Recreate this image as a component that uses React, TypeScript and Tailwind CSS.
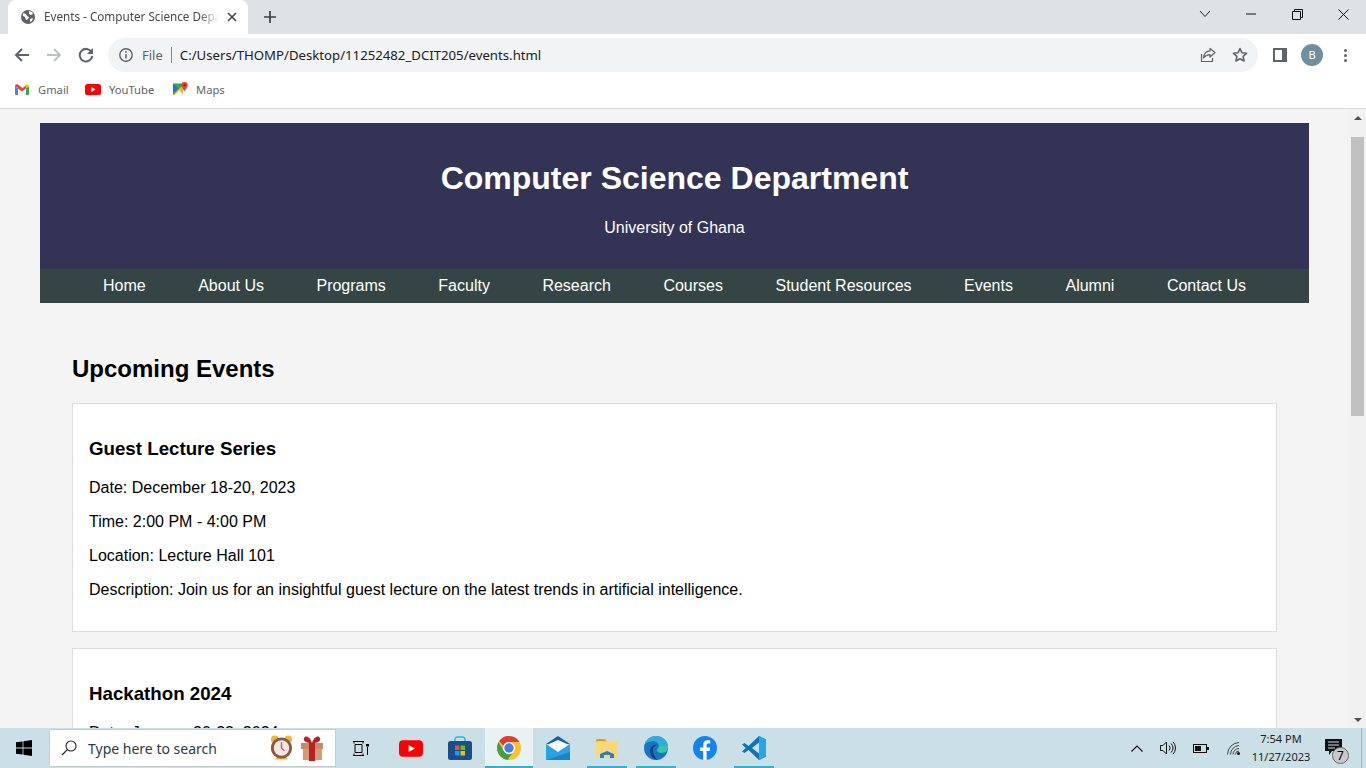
import React from "react";

const UI = { fontFamily: '"Noto Sans", "Open Sans", sans-serif' };
const WEB = { fontFamily: '"Liberation Sans", Arial, sans-serif' };

function Slot({ w, children, className = "" }: { w: number; children?: React.ReactNode; className?: string }) {
  return (
    <div className={"flex h-full shrink-0 items-center justify-center " + className} style={{ width: w }}>
      {children}
    </div>
  );
}

function Globe() {
  return (
    <svg width="16" height="16" viewBox="0 0 16 16">
      <circle cx="8" cy="8" r="7" fill="#5f6368" />
      <path d="M3 4l3 1 1 2 2 1-1 2 -2 1-1-3-2-1zM9 2l3 1 1 2-2 1-2-1zM10 10l3-1-1 3-2 1z" fill="#fff" />
    </svg>
  );
}

function TabStrip() {
  return (
    <div className="flex h-[34px] shrink-0 items-end bg-[#dee1e6]">
      <div className="relative ml-[8px] flex h-[34px] w-[240px] items-center rounded-t-[8px] bg-white pl-[12px]">
        <Globe />
        <span className="ml-[8px] w-[177px] overflow-hidden whitespace-nowrap text-[11.7px] text-[#45474a]" style={{ ...UI, maskImage: "linear-gradient(90deg,#000 155px,transparent 175px)" }}>
          Events - Computer Science Department
        </span>
        <svg width="10" height="10" viewBox="0 0 10 10" className="ml-[6px]">
          <path d="M1 1l8 8M9 1l-8 8" stroke="#45474a" strokeWidth="1.6" />
        </svg>
      </div>
      <Slot w={44}>
        <svg width="14" height="14" viewBox="0 0 14 14">
          <path d="M7 1v12M1 7h12" stroke="#3c4043" strokeWidth="1.7" />
        </svg>
      </Slot>
      <div className="flex-1" />
      <Slot w={46}>
        <svg width="12" height="8" viewBox="0 0 12 8" className="mb-[6px]"><path d="M1 1l5 5.5L11 1" fill="none" stroke="#222" strokeWidth="1" /></svg>
      </Slot>
      <Slot w={46}>
        <svg width="10" height="2" viewBox="0 0 10 2" className="mb-[6px]"><path d="M0 1h10" stroke="#111" strokeWidth="1" /></svg>
      </Slot>
      <Slot w={46}>
        <svg width="11" height="11" viewBox="0 0 11 11" className="mb-[6px]"><path d="M.5 2.5h8v8h-8zM2.5 2.5v-2h8v8h-2" fill="none" stroke="#111" strokeWidth="1" /></svg>
      </Slot>
      <Slot w={46}>
        <svg width="11" height="11" viewBox="0 0 11 11" className="mb-[6px]"><path d="M.5.5l10 10M10.5.5l-10 10" stroke="#111" strokeWidth="1" /></svg>
      </Slot>
    </div>
  );
}

function Toolbar() {
  return (
    <div className="flex h-[38px] shrink-0 items-start bg-white pl-[6px]">
      <Slot w={32} className="!h-[34px] mt-[4px]">
        <svg width="16" height="16" viewBox="0 0 16 16"><path d="M15 8H2M8 2L2 8l6 6" fill="none" stroke="#5f6368" strokeWidth="2" /></svg>
      </Slot>
      <Slot w={32} className="!h-[34px] mt-[4px]">
        <svg width="16" height="16" viewBox="0 0 16 16"><path d="M1 8h13M8 2l6 6-6 6" fill="none" stroke="#bdc1c6" strokeWidth="2" /></svg>
      </Slot>
      <Slot w={32} className="!h-[34px] mt-[4px]">
        <svg width="16" height="16" viewBox="0 0 16 16">
          <path d="M13.6 5.2A6.3 6.3 0 1 0 14.3 9" fill="none" stroke="#5f6368" strokeWidth="2" />
          <path d="M15 1v6H9z" fill="#5f6368" />
        </svg>
      </Slot>
      <div className="ml-[6px] mt-[4px] flex h-[34px] w-[1150px] items-center rounded-full bg-[#f1f3f4] pl-[11px]">
        <svg width="14" height="14" viewBox="0 0 14 14">
          <circle cx="7" cy="7" r="6.2" fill="none" stroke="#5f6368" strokeWidth="1.4" />
          <path d="M7 6v4.4" stroke="#5f6368" strokeWidth="1.5" />
          <circle cx="7" cy="3.9" r="1" fill="#5f6368" />
        </svg>
        <span className="ml-[9px] pt-px text-[13px] text-[#5f6368]" style={UI}>File</span>
        <span className="ml-[8px] h-[16px] w-px bg-[#80868b]" />
        <span className="ml-[8px] pt-px text-[13.2px] text-[#202124]" style={UI}>C:/Users/THOMP/Desktop/11252482_DCIT205/events.html</span>
        <div className="flex-1" />
        <svg width="16" height="16" viewBox="0 0 16 16">
          <path d="M1.5 7v7.5h11V11" fill="none" stroke="#5f6368" strokeWidth="1.2" />
          <path d="M15 5.5L10 1.5v2.4C6.5 4 4 6.5 3.5 11 5.5 8.5 7.5 7.6 10 7.6V10z" fill="none" stroke="#5f6368" strokeWidth="1.2" strokeLinejoin="round" />
        </svg>
        <svg width="16" height="16" viewBox="0 0 16 16" className="ml-[16px] mr-[10px]">
          <path d="M8 1.5l1.9 4.3 4.6.5-3.4 3.1 1 4.6L8 11.7l-4.1 2.3 1-4.6L1.5 6.3l4.6-.5z" fill="none" stroke="#5f6368" strokeWidth="1.6" strokeLinejoin="round" />
        </svg>
      </div>
      <div className="ml-[15px] mt-[14px] flex h-[14px] w-[14px] shrink-0 bg-[#5f6368] p-[2px] pr-[5px]">
        <div className="flex-1 bg-white" />
      </div>
      <div className="ml-[14px] mt-[10px] flex h-[22px] w-[22px] shrink-0 items-center justify-center rounded-full bg-[#6f8f9e] text-[11px] text-white" style={UI}>B</div>
      <div className="ml-[21px] mt-[15px] flex h-[13px] flex-col justify-between">
        <span className="h-[3px] w-[3px] rounded-full bg-[#5f6368]" />
        <span className="h-[3px] w-[3px] rounded-full bg-[#5f6368]" />
        <span className="h-[3px] w-[3px] rounded-full bg-[#5f6368]" />
      </div>
    </div>
  );
}

function GmailIcon() {
  return (
    <svg width="14" height="11" viewBox="0 0 14 11">
      <path d="M0 2v8a1 1 0 0 0 1 1h2V4.5z" fill="#4285f4" />
      <path d="M14 2v8a1 1 0 0 1-1 1h-2V4.5z" fill="#34a853" />
      <path d="M0 2c0-1.6 1.6-2.4 3-1.4L7 3.7v3L3 4z" fill="#ea4335" />
      <path d="M3 4.5L7 7.5l4-3v-3l-4 3-4-3z" fill="#ea4335" />
      <path d="M14 2c0-1.6-1.6-2.4-3-1.4V4.5l3-2.2z" fill="#fbbc04" />
    </svg>
  );
}

function YTIcon({ w = 16, h = 11 }: { w?: number; h?: number }) {
  return (
    <svg width={w} height={h} viewBox="0 0 16 11">
      <rect width="16" height="11" rx="2.6" fill="#f00" />
      <path d="M6.4 3.1v4.8L10.6 5.5z" fill="#fff" />
    </svg>
  );
}

function MapsIcon() {
  return (
    <svg width="15" height="15" viewBox="0 0 15 15">
      <path d="M0 1.5h9.5v11.5H0z" fill="#34a853" />
      <path d="M0 13L9.5 3.5V13z" fill="#fbbc04" />
      <path d="M0 1.5L5 6.5 0 11z" fill="#1a73e8" />
      <path d="M1 13.5L6.5 8l4 5.5z" fill="#fff" />
      <path d="M11.5 0a3.2 3.2 0 0 0-3.2 3.2C8.3 5.4 11.5 9 11.5 9s3.2-3.6 3.2-5.8A3.2 3.2 0 0 0 11.5 0z" fill="#ea4335" />
      <circle cx="11.5" cy="3.2" r="1.1" fill="#a50e0e" />
    </svg>
  );
}

function Bookmarks() {
  const t = "pt-px text-[11.2px] text-[#5f6368]";
  return (
    <div className="flex h-[37px] shrink-0 items-center border-b border-[#d9dadb] bg-white pb-[1px]">
      <span className="ml-[15px] flex"><GmailIcon /></span>
      <span className={"ml-[9px] w-[30px] " + t} style={UI}>Gmail</span>
      <span className="ml-[17px] flex"><YTIcon /></span>
      <span className={"ml-[8px] w-[46px] " + t} style={UI}>YouTube</span>
      <span className="ml-[18px] flex"><MapsIcon /></span>
      <span className={"ml-[8px] " + t} style={UI}>Maps</span>
    </div>
  );
}

function EventCard({ title, lines }: { title: string; lines: string[] }) {
  return (
    <section className="mb-[16px] border border-[#dddddd] bg-white px-[16px] pb-[16px] pt-[34px]">
      <h3 className="mb-[20px] text-[18.72px] font-bold leading-[21px] text-black">{title}</h3>
      {lines.map((l) => (
        <p key={l} className="mb-[16px] text-[16px] leading-[18px] text-black">{l}</p>
      ))}
    </section>
  );
}

const NAV = ["Home", "About Us", "Programs", "Faculty", "Research", "Courses", "Student Resources", "Events", "Alumni", "Contact Us"];

function Page() {
  return (
    <div className="min-w-0 flex-1 overflow-hidden bg-[#f4f4f4] px-[40px] pt-[14px]" style={WEB}>
      <header className="bg-[#333356] pb-[32px] pt-[37px] text-center text-white">
        <h1 className="text-[32px] font-bold leading-[37px]">Computer Science Department</h1>
        <p className="mt-[22px] text-[16px] leading-[18px]">University of Ghana</p>
      </header>
      <nav className="flex h-[34px] items-center justify-center gap-[52.5px] bg-[#354545] text-[16px] text-white">
        {NAV.map((n) => <span key={n}>{n}</span>)}
      </nav>
      <main className="px-[32px] pt-[52px]">
        <h2 className="mb-[20px] text-[24px] font-bold leading-[28px] text-black">Upcoming Events</h2>
        <EventCard
          title="Guest Lecture Series"
          lines={[
            "Date: December 18-20, 2023",
            "Time: 2:00 PM - 4:00 PM",
            "Location: Lecture Hall 101",
            "Description: Join us for an insightful guest lecture on the latest trends in artificial intelligence.",
          ]}
        />
        <EventCard title="Hackathon 2024" lines={["Date: January 20-22, 2024"]} />
      </main>
    </div>
  );
}

function Scrollbar() {
  return (
    <div className="flex w-[17px] shrink-0 flex-col bg-[#f1f1f1]">
      <div className="flex h-[17px] w-full items-center justify-center">
        <div className="h-0 w-0 border-x-[4px] border-b-[4px] border-x-transparent border-b-[#505050]" />
      </div>
      <div className="ml-[2px] mt-[11px] h-[279px] w-[13px] bg-[#c1c1c1]" />
      <div className="flex-1" />
      <div className="flex h-[17px] w-full items-center justify-center">
        <div className="h-0 w-0 border-x-[4px] border-t-[4px] border-x-transparent border-t-[#505050]" />
      </div>
    </div>
  );
}

function ChromeIcon() {
  return (
    <svg width="24" height="24" viewBox="0 0 24 24">
      <circle cx="12" cy="12" r="12" fill="#fbc02d" />
      <path d="M12 0a12 12 0 0 1 10.4 6H12a6 6 0 0 0-5.6 3.8L2.1 5.1A12 12 0 0 1 12 0z" fill="#e53935" />
      <path d="M1.6 6a12 12 0 0 0 9 17.9l4.7-6.7A6 6 0 0 1 6.6 14.6z" fill="#43a047" />
      <circle cx="12" cy="12" r="6" fill="#fff" />
      <circle cx="12" cy="12" r="4.7" fill="#3f80ea" />
    </svg>
  );
}

function Underline() {
  return <span className="absolute bottom-0 left-[5px] right-[4px] h-[2px] bg-[#2fb5cb]" />;
}

function Taskbar() {
  return (
    <div className="flex h-[40px] shrink-0 items-stretch bg-[#cbdfe6]" style={UI}>
      <Slot w={49}>
        <svg width="16" height="16" viewBox="0 0 16 16" className="ml-[-2px]">
          <path d="M0 2.3l6.6-.9v6.2H0zM7.4 1.3L16 0v7.6H7.4zM0 8.4h6.6v6.2L0 13.7zM7.4 8.4H16V16l-8.6-1.3z" fill="#000" />
        </svg>
      </Slot>
      <div className="my-[1px] flex w-[287px] shrink-0 items-center border border-[#c5cdd0] bg-white pl-[11px]">
        <svg width="16" height="16" viewBox="0 0 16 16">
          <circle cx="10" cy="6" r="5" fill="none" stroke="#222" strokeWidth="1.1" />
          <path d="M6.4 9.6L1 15" stroke="#222" strokeWidth="1.2" />
        </svg>
        <span className="ml-[11px] w-[129px] whitespace-nowrap text-[14px] text-[#2c3a45]" style={UI}>Type here to search</span>
        <svg width="25" height="28" viewBox="0 0 26 28" className="ml-[52px]">
          <circle cx="6" cy="5" r="4" fill="#f2b632" />
          <circle cx="20" cy="5" r="4" fill="#f2b632" />
          <path d="M6 26l3-4h8l3 4z" fill="#f2b632" />
          <circle cx="13" cy="14" r="11" fill="#8a5a44" />
          <circle cx="13" cy="14" r="8" fill="#f1e7e3" />
          <path d="M13 8v6l3 3" fill="none" stroke="#d9506a" strokeWidth="1.4" />
        </svg>
        <svg width="24" height="26" viewBox="0 0 24 26" className="ml-[6px]">
          <path d="M1 9h22l-1 5v11H3V14z" fill="#d49a76" />
          <rect x="1" y="8" width="22" height="6" fill="#c98a64" />
          <rect x="9" y="8" width="6" height="18" fill="#b8211f" />
          <path d="M12 8C6 8 3 6 4 3s6-2 8 5c2-7 7-8 8-5s-2 5-8 5z" fill="#b8211f" />
        </svg>
      </div>
      <Slot w={50}>
        <svg width="17" height="15" viewBox="0 0 17 15" className="ml-[-2px]">
          <path d="M1 .5h11M3 3.5h7v8H3zM1 14.5h11M2 .5v2M11 .5v2M2 12.5v2M11 12.5v2M15.5 6v8" fill="none" stroke="#000" strokeWidth="1" />
          <rect x="14" y="3" width="3" height="2.5" fill="#000" />
        </svg>
      </Slot>
      <Slot w={49}><YTIcon w={24} h={17} /></Slot>
      <Slot w={49}>
        <svg width="24" height="24" viewBox="0 0 24 24">
          <path d="M7 6V3.5A2.5 2.5 0 0 1 9.5 1h5A2.5 2.5 0 0 1 17 3.5V6" fill="none" stroke="#2cb5e8" strokeWidth="1.6" />
          <rect y="5" width="24" height="19" rx="2.5" fill="#17508c" />
          <rect x="7" y="9.5" width="4.5" height="4.5" fill="#f25022" />
          <rect x="12.5" y="9.5" width="4.5" height="4.5" fill="#7fba00" />
          <rect x="7" y="15" width="4.5" height="4.5" fill="#00a4ef" />
          <rect x="12.5" y="15" width="4.5" height="4.5" fill="#ffb900" />
        </svg>
      </Slot>
      <Slot w={48} className="relative ml-px bg-[#e8f1f4]">
        <span className="ml-[-1px] flex"><ChromeIcon /></span>
        <span className="absolute bottom-0 left-0 right-0 h-[2px] bg-[#2fb5cb]" />
      </Slot>
      <Slot w={49}>
        <svg width="24" height="24" viewBox="0 0 24 24">
          <path d="M0 8L12 0l12 8z" fill="#0f62a8" />
          <path d="M3 8l9-4 9 4v3l-9 5-9-5z" fill="#fff" />
          <path d="M0 8l12 8 12-8v16H0z" fill="#2aa3e6" />
          <path d="M0 24l24-8v8z" fill="#1486c9" />
        </svg>
      </Slot>
      <Slot w={49} className="relative">
        <svg width="22" height="19" viewBox="0 0 22 19">
          <path d="M0 1.5A1.5 1.5 0 0 1 1.5 0H9l2 2.5H0z" fill="#d9a21b" />
          <rect y="2.5" width="22" height="16.5" rx="1" fill="#fbd872" />
          <path d="M4 19v-4l7-3 7 3v4h-4v-3H8v3z" fill="#2b7cc9" />
        </svg>
        <Underline />
      </Slot>
      <Slot w={49} className="relative">
        <svg width="24" height="24" viewBox="0 0 24 24">
          <circle cx="12" cy="12" r="12" fill="#1676c4" />
          <path d="M1 8C3 2 8 0 12 0c6 0 12 5 12 11 0 3-2 6-6 6-3 0-5-1-5-3 0-2 2-2 2-4 0-3-3-5-6-5S3 6 1 8z" fill="#36c5a7" />
          <path d="M12 0c-5 0-9 3-11 8 2-2 5-3 8-3 4 0 6 2 6 5h9C24 5 18 0 12 0z" fill="#33a9e0" />
          <path d="M9 14c0-3 2-5 5-5-4-1-8 2-8 6 0 4 3 8 8 9-3-2-5-6-5-10z" fill="#0c3f78" />
        </svg>
        <Underline />
      </Slot>
      <Slot w={49}>
        <svg width="24" height="24" viewBox="0 0 24 24">
          <circle cx="12" cy="12" r="12" fill="#1184ef" />
          <path d="M13.6 24v-9h3l.5-3.6h-3.5V9.2c0-1 .4-1.7 1.8-1.7h1.8V4.3c-.4 0-1.4-.1-2.6-.1-2.7 0-4.4 1.6-4.4 4.6v2.6H7v3.6h3.2v9z" fill="#fff" />
        </svg>
      </Slot>
      <Slot w={49} className="relative">
        <svg width="24" height="24" viewBox="0 0 24 24">
          <path d="M17 0l7 3.4v17.2L17 24 6.5 14l-4 3L0 15.5 3.8 12 0 8.5 2.5 7l4 3z" fill="#0e73b8" />
          <path d="M17 0l7 3.4v17.2L17 24z" fill="#22a6ee" />
          <path d="M17 6.5L10 12l7 5.5z" fill="#cbdfe6" />
        </svg>
        <Underline />
      </Slot>
      <div className="flex-1" />
      <Slot w={24}>
        <svg width="12" height="7" viewBox="0 0 12 7"><path d="M.5 6.5L6 1l5.5 5.5" fill="none" stroke="#111" strokeWidth="1.1" /></svg>
      </Slot>
      <Slot w={38}>
        <svg width="17" height="14" viewBox="0 0 17 14">
          <path d="M.5 4.5h2.5L6.5 1v12L3 9.5H.5z" fill="none" stroke="#111" strokeWidth="1" />
          <path d="M9 4.5a3.5 3.5 0 0 1 0 5M11 2.5a6 6 0 0 1 0 9M13 .8a9 9 0 0 1 0 12.4" fill="none" stroke="#111" strokeWidth="1" />
        </svg>
      </Slot>
      <Slot w={28}>
        <svg width="16" height="9" viewBox="0 0 16 9">
          <rect x=".5" y=".5" width="13" height="8" fill="none" stroke="#111" />
          <rect x="2" y="2" width="6" height="5" fill="#111" />
          <rect x="14" y="3" width="2" height="3" fill="#111" />
        </svg>
      </Slot>
      <Slot w={37}>
        <svg width="14" height="13" viewBox="0 0 14 13">
          <path d="M.5 12.5A12 12 0 0 1 12 .5M3.5 12.5A9 9 0 0 1 12 3.5M6 12.5A6 6 0 0 1 12 6.5M8.5 12.5A3.5 3.5 0 0 1 12 9" fill="none" stroke="#333" strokeWidth=".9" />
          <circle cx="11.5" cy="11.5" r="1.5" fill="#111" />
        </svg>
      </Slot>
      <div className="flex w-[58px] shrink-0 flex-col items-center justify-center whitespace-nowrap text-[11px] leading-[18px] text-[#222]" style={UI}>
        <span>7:54 PM</span>
        <span>11/27/2023</span>
      </div>
      <Slot w={51} className="relative !justify-start pl-[15px]">
        <svg width="17" height="16" viewBox="0 0 17 16" className="mb-[2px]">
          <path d="M0 0h17v12H7l-3 4v-4H0z" fill="#111" />
          <path d="M3 3h11M3 6h11M3 9h7" stroke="#cbdfe6" strokeWidth="1" />
        </svg>
        <span className="absolute left-[22px] top-[19px] flex h-[17px] w-[17px] items-center justify-center rounded-full border border-[#666] bg-[#c9c9c9] text-[12px] text-black">7</span>
      </Slot>
      <div className="w-[5px] shrink-0 border-l border-[#9fb2ba]" />
    </div>
  );
}

export default function App() {
  return (
    <div className="flex h-screen w-full flex-col overflow-hidden bg-white">
      <TabStrip />
      <Toolbar />
      <Bookmarks />
      <div className="flex min-h-0 flex-1">
        <Page />
        <Scrollbar />
      </div>
      <Taskbar />
    </div>
  );
}
